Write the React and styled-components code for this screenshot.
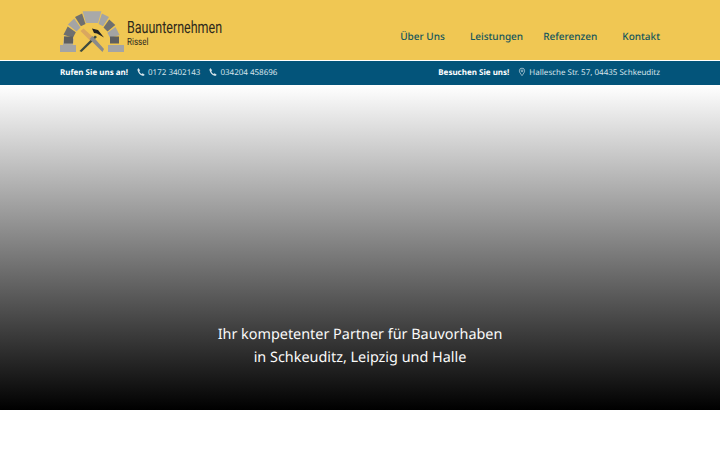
import React from "react";
import styled, { createGlobalStyle } from "styled-components";

const Global = createGlobalStyle`
  html, body { margin: 0; padding: 0; background: #fff; }
  body {
    font-family: "Noto Sans", "Open Sans", sans-serif;
    text-rendering: geometricPrecision;
  }
`;

const Page = styled.div`
  width: 720px;
  height: 450px;
  overflow: hidden;
  background: #fff;
`;

const Header = styled.header`
  height: 60px;
  box-sizing: border-box;
  padding: 0 60px;
  background: #f0c753;
  display: flex;
  align-items: center;
  justify-content: space-between;
`;

const Logo = styled.a`
  display: flex;
  align-items: flex-start;
  gap: 3px;
  height: 42px;
  margin-top: 2px;
`;

const LogoText = styled.div`
  display: flex;
  flex-direction: column;
  margin-top: 9px;
  color: #2f2a1c;
  font-family: "Roboto", sans-serif;
`;

const LogoTitle = styled.span`
  font-size: 17px;
  font-weight: 400;
  line-height: 18px;
  display: inline-block;
  width: 96px;
  white-space: nowrap;
  transform: scaleX(0.735);
  transform-origin: left center;
`;

const LogoSub = styled.span`
  font-size: 10px;
  font-weight: 400;
  line-height: 12px;
  display: inline-block;
  transform: scaleX(0.8);
  transform-origin: left center;
`;

const Nav = styled.nav`
  display: flex;
  align-items: center;
  margin-top: 12px;
`;

const NavLink = styled.a`
  color: #14565c;
  font-size: 10px;
  font-weight: 500;
  line-height: 16px;
  margin-left: ${(p) => p.$gap}px;
  white-space: nowrap;
`;

const InfoBar = styled.div`
  margin-top: 1px;
  height: 24px;
  box-sizing: border-box;
  padding: 0 60px 2px;
  background: #03547a;
  color: #d5e3ea;
  display: flex;
  align-items: center;
  justify-content: space-between;
  font-size: 8px;
`;

const InfoGroup = styled.div`
  display: flex;
  align-items: center;
`;

const InfoLabel = styled.strong`
  color: #fff;
  font-weight: 700;
  margin-right: ${(p) => p.$gap}px;
`;

const InfoItem = styled.span`
  display: flex;
  align-items: center;
  gap: 3px;
  margin-right: ${(p) => p.$gap || 0}px;
  white-space: nowrap;
`;

const Hero = styled.section`
  height: 325px;
  box-sizing: border-box;
  background: linear-gradient(to bottom, #ffffff 0%, #000000 100%);
  display: flex;
  flex-direction: column;
  justify-content: flex-end;
  align-items: center;
  padding-bottom: 41px;
`;

const HeroText = styled.h1`
  margin: 0;
  color: #fafafa;
  font-size: 14.4px;
  font-weight: 400;
  line-height: 23px;
  text-align: center;
`;

const Icon = styled.svg`
  display: block;
  flex: none;
`;

function wedge(cx, cy, r0, r1, a0, a1) {
  const p = (r, a) => {
    const t = (a * Math.PI) / 180;
    return `${(cx + r * Math.cos(t)).toFixed(1)},${(cy - r * Math.sin(t)).toFixed(1)}`;
  };
  return [p(r0, a0), p(r1, a0), p(r1, a1), p(r0, a1)].join(" ");
}

const stones = [
  [18, 36, "#a4a4a4", 19, 29],
  [39, 55, "#6f6f6f", 20, 30],
  [58, 72, "#a4a4a4", 21, 32],
  [74, 106, "#a9a9a9", 22, 34],
  [108, 122, "#6f6f6f", 21, 32],
  [125, 141, "#a4a4a4", 20, 31],
  [144, 162, "#6f6f6f", 20, 30],
  [164, 182, "#a4a4a4", 19, 29],
];

function LogoMark() {
  return (
    <Icon width="64" height="42" viewBox="60 10 64 42">
      {stones.map(([a0, a1, c, r0, r1]) => (
        <polygon key={a0} points={wedge(92, 44, r0, r1, a0, a1)} fill={c} />
      ))}
      <rect x="64" y="36.500" width="9" height="7" fill="#5f5f5f" />
      <rect x="110" y="36.500" width="9" height="7" fill="#5f5f5f" />
      <rect x="60" y="45" width="16" height="7" fill="#a4a4a4" />
      <rect x="108" y="45" width="16" height="7" fill="#a4a4a4" />
      <path d="M79.500 51 L95 35.500 L97 37 L81.500 52 Z" fill="#3d4a3f" />
      <path d="M80.500 31 L83.500 28.500 L93 37 L90 40.500 Z" fill="#d9a760" />
      <path d="M89.500 39 L92.500 36 L104 49 L102.500 52 Z" fill="#8a8a8a" />
      <path d="M92 28.500 L98 30 L104 37.500 L97 33.500 L94 33 Z" fill="#222" />
    </Icon>
  );
}

function Phone() {
  return (
    <Icon width="8" height="10" viewBox="0 0 24 24" fill="#d5e3ea">
      <path d="M5 1 L9 6.500 L7 10 C8.500 14 10.500 16.500 14 18 L17 15.500 L23 20 C21.500 23 19 24 16.500 23.500 C9 21.500 3 14 1.500 6.500 C1.200 4 2.500 2 5 1 Z" />
    </Icon>
  );
}

function Pin() {
  return (
    <Icon width="8" height="10" viewBox="0 0 24 24" fill="none" stroke="#d5e3ea" strokeWidth="2">
      <path d="M12 23 C7 16 4 12.500 4 8.500 A8 8 0 0 1 20 8.500 C20 12.500 17 16 12 23 Z" />
      <circle cx="12" cy="8.500" r="2.800" />
    </Icon>
  );
}

export default function App() {
  return (
    <Page>
      <Global />
      <Header>
        <Logo>
          <LogoMark />
          <LogoText>
            <LogoTitle>Bauunternehmen</LogoTitle>
            <LogoSub>Rissel</LogoSub>
          </LogoText>
        </Logo>
        <Nav>
          <NavLink $gap={0}>Über Uns</NavLink>
          <NavLink $gap={25}>Leistungen</NavLink>
          <NavLink $gap={20}>Referenzen</NavLink>
          <NavLink $gap={25}>Kontakt</NavLink>
        </Nav>
      </Header>
      <InfoBar>
        <InfoGroup>
          <InfoLabel $gap={9}>Rufen Sie uns an!</InfoLabel>
          <InfoItem $gap={9}><Phone />0172 3402143</InfoItem>
          <InfoItem><Phone />034204 458696</InfoItem>
        </InfoGroup>
        <InfoGroup>
          <InfoLabel $gap={9}>Besuchen Sie uns!</InfoLabel>
          <InfoItem><Pin />Hallesche Str. 57, 04435 Schkeuditz</InfoItem>
        </InfoGroup>
      </InfoBar>
      <Hero>
        <HeroText>
          Ihr kompetenter Partner für Bauvorhaben
          <br />
          in Schkeuditz, Leipzig und Halle
        </HeroText>
      </Hero>
    </Page>
  );
}
